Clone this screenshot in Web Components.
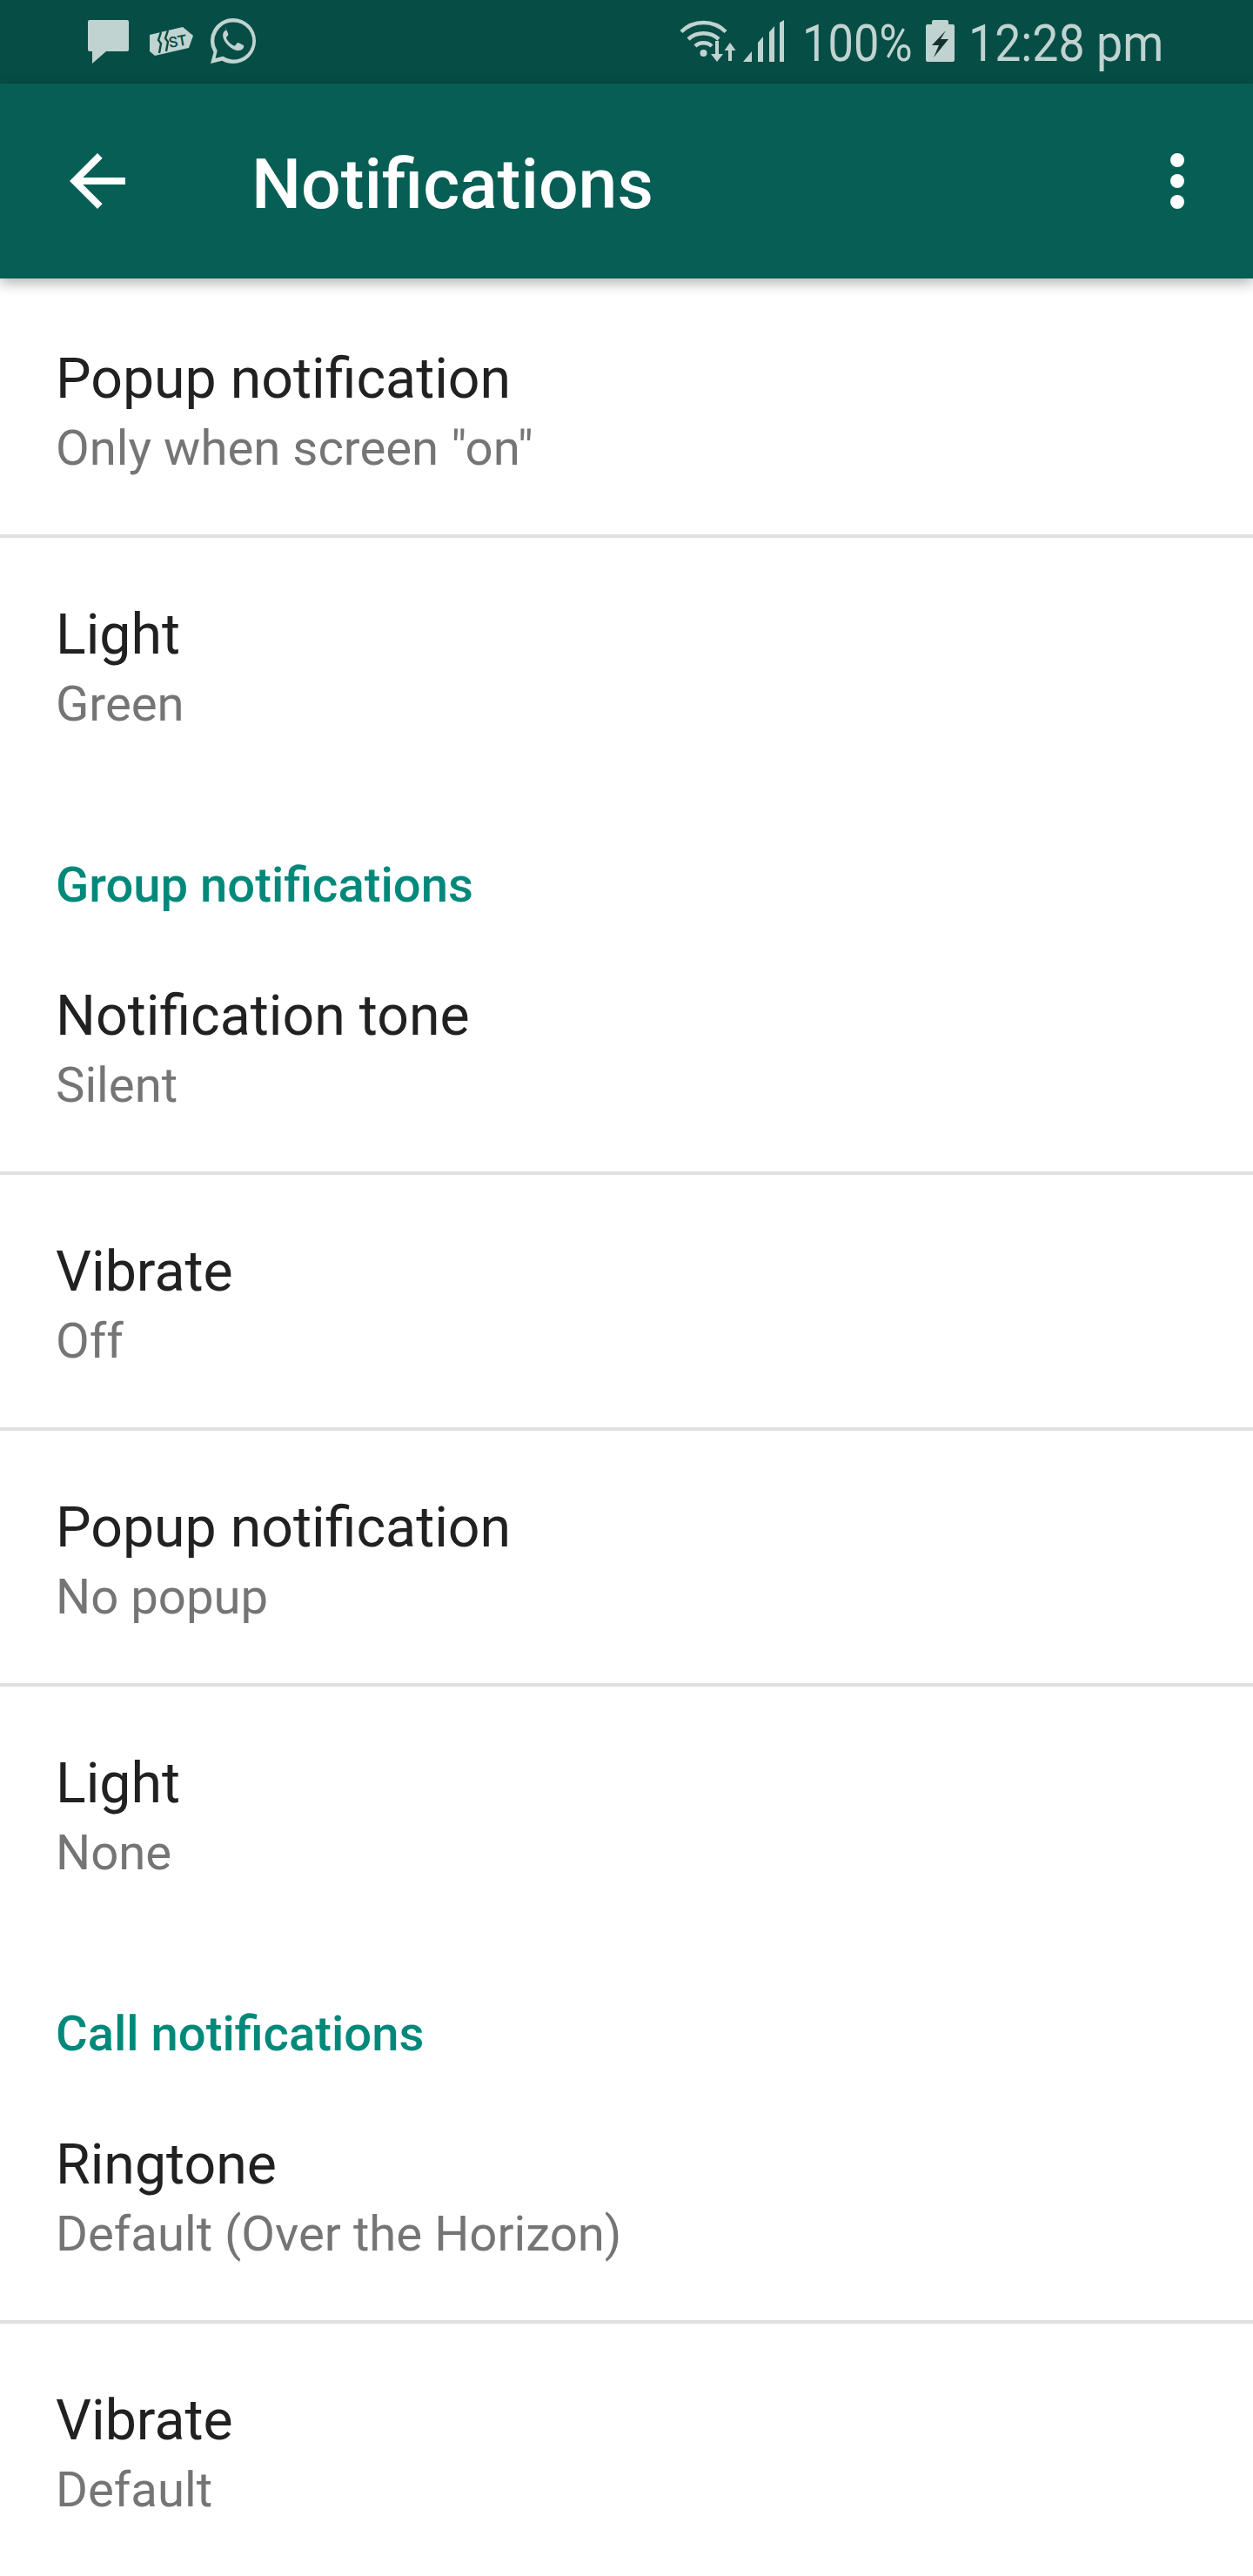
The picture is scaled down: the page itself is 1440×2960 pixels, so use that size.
<!DOCTYPE html>
<html lang="en"><head><meta charset="utf-8"><title>Notifications</title>
<style>
html,body{margin:0;background:#fff}
body{font-family:Roboto,"Liberation Sans",sans-serif}
</style></head><body>
<template id="t-status">
<style>
:host{display:flex;height:96px;background:#064d45;color:#c0d3d0;align-items:flex-start;box-sizing:border-box;overflow:hidden}
.left{display:flex;align-items:flex-start;padding:21px 0 0 100px;gap:20px}
.right{margin-left:auto;display:flex;align-items:flex-start;padding:21px 106px 0 0}
svg{display:block;fill:currentColor}
.t{font:400 60px/60px Roboto,sans-serif;white-space:nowrap;display:block;transform-origin:0 0;margin-top:-1px}
.pct{width:124px;margin-left:21px;transform:scaleX(.873)}
.clock{width:221px;margin-left:16px;transform:scaleX(.895)}
</style>
<div class="left">
<svg width="48" height="52" viewBox="0 0 48 52"><path d="M3 2h43a2 2 0 0 1 2 2v32a2 2 0 0 1-2 2H22L6 52V38H3a2 2 0 0 1-2-2V4a2 2 0 0 1 2-2z"/></svg>
<svg width="52" height="52" viewBox="0 0 52 52" style="margin-left:2px"><path d="M2 19l38-9 12 10-5 14L8 43 2 38z"/><path d="M15 16l-3 9 3 4-2 11M23 14l-3 9 3 4-2 11" fill="none" stroke="#064d45" stroke-width="2.4"/><text x="25" y="34" font-family="Roboto,sans-serif" font-size="17" font-weight="500" fill="#064d45" transform="rotate(-10 25 34)">ST</text></svg>
<svg width="52" height="52" viewBox="0 0 52 52"><path fill-rule="evenodd" d="M26 0a26 26 0 0 1 0 52c-4.600 0-8.900-1.200-12.700-3.300L0 52l3.500-12.900A26 26 0 0 1 26 0zm0 4.500a21.500 21.500 0 0 0-18.300 32.800L5.600 46l8.900-2.300A21.500 21.500 0 1 0 26 4.500z"/><path d="M18.500 13.500c-1.300 0-3.900 1.600-4.300 4.900-.5 4 2 8.600 5.800 12.500 4 4 8.900 6.700 12.800 6.200 3.300-.4 5.200-2.700 5.400-4.400.1-1-.2-1.500-.9-1.900l-5-2.500c-.8-.4-1.400-.2-1.900.4l-1.900 2.400c-.5.600-1 .7-1.800.3-3.800-1.800-6.700-4.700-8.500-8.200-.3-.7-.2-1.200.3-1.700l1.500-1.900c.5-.6.500-1.100.2-1.800l-2-4.800c-.4-1.100-1-1.500-1.700-1.500z"/></svg>
</div>
<div class="right">
<svg width="66" height="50" viewBox="0 0 66 50" style="margin-top:2px"><g fill="none" stroke="currentColor" stroke-width="4.500"><path d="M2 13.500C16-.5 39-.5 53 13.500"/><path d="M10 22c9.500-9 25.500-9 35 0"/><path d="M18 30c5-5 14-5 19 0"/></g><circle cx="27.500" cy="38" r="4"/><path d="M41 24h4v15h5l-7 9-7-9h5zM60 47h-4V35h-4.500L58 26l6.500 9H60z"/></svg>
<svg width="47" height="48" viewBox="0 0 47 48" style="margin:2px 0 0 7px"><path d="M0 48 10 36v12zM17 48V26l6-7v29zM30 48V14l6-7v41zM42 48V3l5-3v48z"/></svg>
<span class="t pct">100%</span>
<svg width="33" height="48" viewBox="0 0 33 48" style="margin:2px 0 0 18px"><path d="M9 0h15a2 2 0 0 1 2 2v3h5a2 2 0 0 1 2 2v39a2 2 0 0 1-2 2H2a2 2 0 0 1-2-2V7a2 2 0 0 1 2-2h5V2a2 2 0 0 1 2-2z"/><path fill="#16302d" d="M23 12 7 29h8l-6 14 17-21h-9z"/></svg>
<span class="t clock">12:28 pm</span>
</div>
</template>

<template id="t-appbar">
<style>
:host{display:flex;align-items:center;height:224px;background:#075e54;color:#fff;position:relative;z-index:1;box-shadow:0 6px 14px rgba(0,0,0,.28)}
.ic{width:96px;height:96px;display:block;fill:#fff;flex:none}
.back{margin-left:64px}
h1{margin:0 0 0 129px;padding-top:8px;font:500 80.5px/96px Roboto,sans-serif;flex:1}
.more{margin-right:39px}
</style>
<svg class="ic back" viewBox="0 0 24 24"><path d="M20 11H7.830l5.590-5.590L12 4l-8 8 8 8 1.410-1.410L7.830 13H20v-2z"/></svg>
<h1><slot></slot></h1>
<svg class="ic more" viewBox="0 0 24 24"><circle cx="12" cy="6" r="2"/><circle cx="12" cy="12" r="2"/><circle cx="12" cy="18" r="2"/></svg>
</template>

<template id="t-row">
<style>
:host{display:block;height:294px;box-sizing:border-box;padding:71px 64px 0;border-top:4px solid #e0e0e0}
:host([first]){border-top-color:transparent}
.title{font:400 64.4px/80px Roboto,sans-serif;color:#212121}
.sub{font:400 56.3px/81px Roboto,sans-serif;color:#757575}
</style>
<div class="title"></div><div class="sub"></div>
</template>

<template id="t-head">
<style>
:host{display:block;height:144px;box-sizing:border-box;padding:73px 64px 0;font:500 56.2px/72px Roboto,sans-serif;color:#00897b}
</style><slot></slot>
</template>

<template id="t-page">
<style>:host{display:block;height:2960px;overflow:hidden;background:#fff}</style><slot></slot>
</template>

<app-page>
<status-bar></status-bar>
<app-bar>Notifications</app-bar>
<pref-row first title-text="Popup notification" sub="Only when screen &quot;on&quot;"></pref-row>
<pref-row title-text="Light" sub="Green"></pref-row>
<pref-head>Group notifications</pref-head>
<pref-row first title-text="Notification tone" sub="Silent"></pref-row>
<pref-row title-text="Vibrate" sub="Off"></pref-row>
<pref-row title-text="Popup notification" sub="No popup"></pref-row>
<pref-row title-text="Light" sub="None"></pref-row>
<pref-head>Call notifications</pref-head>
<pref-row first title-text="Ringtone" sub="Default (Over the Horizon)"></pref-row>
<pref-row title-text="Vibrate" sub="Default"></pref-row>
</app-page>
<script>
function reg(name,tid,init){
  customElements.define(name,class extends HTMLElement{
    constructor(){super();this.attachShadow({mode:'open'}).appendChild(document.getElementById(tid).content.cloneNode(true));}
    connectedCallback(){if(init)init(this);}
  });
}
reg('app-page','t-page');
reg('status-bar','t-status');
reg('app-bar','t-appbar');
reg('pref-head','t-head');
reg('pref-row','t-row',el=>{
  el.shadowRoot.querySelector('.title').textContent=el.getAttribute('title-text');
  el.shadowRoot.querySelector('.sub').textContent=el.getAttribute('sub');
});
</script>
</body></html>
